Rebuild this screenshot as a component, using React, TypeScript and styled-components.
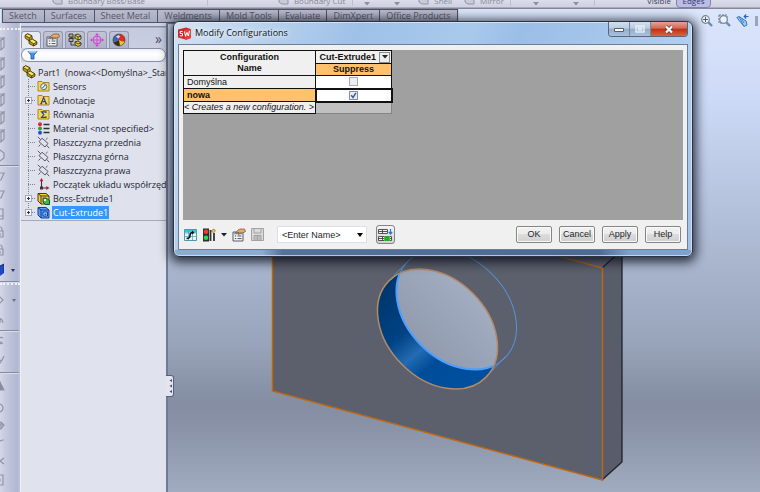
import React from "react";
import styled, { createGlobalStyle } from "styled-components";

const GlobalStyle = createGlobalStyle`
  * { box-sizing: border-box; }
  html, body { margin: 0; padding: 0; }
  body { font-family: "Open Sans", "Noto Sans", sans-serif; font-size: 9px; color: #1d1f2a; overflow: hidden; }
  button, select, input { font: inherit; color: inherit; margin: 0; padding: 0; }
  svg { display: block; flex: none; }
`;

/* ---------- page frame ---------- */

const Page = styled.div`
  min-height: 100vh;
  display: flex;
  flex-direction: column;
  overflow: hidden;
  background: linear-gradient(#dde7fc 0%, #cddaf7 20%, #a8b5cd 54%, #98a4b9 70%, #848da1 82%, #8891a5 86%, #a2acc0 100%);
`;

const Ribbon = styled.header`
  height: 9px;
  display: flex;
  align-items: flex-end;
  padding: 0 49px 3px 52px;
  overflow: hidden;
  color: #85879a;
  font-size: 8px;
  line-height: 10px;
  background: linear-gradient(#dcdde9, #d2d3e2 5px, #d0d2e0 7px, #858799 8px);
`;

const RibbonItem = styled.button<{ $after: number }>`
  display: flex;
  align-items: flex-end;
  gap: 5px;
  margin-right: ${(p) => p.$after}px;
  border: 0;
  background: none;
  white-space: nowrap;
  line-height: 10px;
`;

const RibbonRule = styled.span<{ $after: number }>`
  width: 1px;
  height: 9px;
  margin-right: ${(p) => p.$after}px;
  background: #bdbfce;
`;

const RibbonState = styled.div`
  display: flex;
  align-items: flex-end;
  gap: 5px;
  margin-left: auto;
  color: #3c3f60;
  font-size: 8px;
`;

const Edges = styled.button`
  width: 35px;
  height: 14px;
  margin-bottom: -2px;
  border: 1px solid #7f82b0;
  border-radius: 4px;
  background: #bbbde4;
  color: #343871;
  line-height: 10px;
`;

const TabRow = styled.div`
  height: 14px;
  display: flex;
  align-items: stretch;
  padding: 0 2px;
`;

const Tabs = styled.nav`
  display: flex;
  border: solid #505265;
  border-width: 1px 0 1px 1px;
  box-shadow: 0 1px 1px #77798c;
`;

const Tab = styled.button`
  padding: 0 6px;
  border: 0;
  border-right: 1px solid #505265;
  background: linear-gradient(#b9bbcd, #a9abc0);
  color: #55576a;
  line-height: 12px;
  white-space: nowrap;
  &:nth-child(-n + 4) { padding-right: 7px; }
`;

const ViewTools = styled.div`
  display: flex;
  gap: 5px;
  margin: 4px 0 -5px auto;
  overflow: hidden;
  width: 58px;
`;

const GlyphButton = styled.button`
  display: flex;
  align-items: center;
  justify-content: center;
  border: 0;
  background: none;
`;

const Body = styled.div`
  flex: 1;
  display: flex;
  min-height: 0;
`;

/* ---------- side tool strip ---------- */

const Strip = styled.aside`
  flex: none;
  width: 20px;
  padding-top: 5px;
  background: linear-gradient(90deg, #d3d6e6, #c5c9df 30%, #b1b7d1 85%, #bfc4d9);
`;

const Grip = styled.div`
  height: 5px;
  border-top: 2px dotted #f1f2f8;
`;

const Slot = styled.button<{ $h: number }>`
  width: 100%;
  height: ${(p) => p.$h}px;
  display: flex;
  align-items: center;
  gap: 7px;
  border: 0;
  background: none;
`;

const StripRule = styled.hr`
  height: 2px;
  margin: 0 1px 0 0;
  border: 0;
  background: linear-gradient(#848aa1 50%, #d9dcea 50%);
`;

/* ---------- feature panel ---------- */

const Panel = styled.section`
  flex: none;
  width: 148px;
  display: flex;
  flex-direction: column;
  border-right: 2px solid #727b95;
  border-left: 1px solid #eceef5;
  background: #e0e3ed;
`;

const PanelTop = styled.div`
  padding-top: 3px;
  background: linear-gradient(#ccd4e9 3px, #858ca3 3px, #858ca3 4px, #c6cade 5px, #cdd1e2);
`;

const PanelTabs = styled.div`
  display: flex;
  align-items: flex-end;
  gap: 2px;
  height: 22px;
  padding-top: 5px;
`;

const PanelTab = styled.button<{ $on?: boolean }>`
  width: 20px;
  height: 17px;
  display: flex;
  align-items: center;
  justify-content: center;
  border: 1px solid #9298ae;
  border-bottom: 0;
  border-radius: 3px 3px 0 0;
  background: ${(p) => (p.$on ? "#e9ebf4" : "linear-gradient(#c2c5d6, #aeb2c7)")};
`;

const More = styled.button`
  margin: 0 4px 2px auto;
  border: 0;
  background: none;
  color: #474b66;
  font-size: 14px;
  line-height: 14px;
`;

const Filter = styled.label`
  height: 14px;
  display: flex;
  align-items: center;
  gap: 3px;
  padding-left: 5px;
  border: 1px solid #868da6;
  border-radius: 7px;
  background: linear-gradient(#eef0f6, #fff 40%, #f3f4f9);
`;

const FilterInput = styled.input`
  flex: 1;
  min-width: 0;
  height: 10px;
  border: 0;
  outline: 0;
  background: none;
`;

const Tree = styled.ul`
  list-style: none;
  margin: 0;
  padding: 3px 0 1px;
  border-bottom: 1px solid #a4a9bd;
  background: #dfe2ed;
  overflow: hidden;
`;

const TreeRow = styled.li<{ $root?: boolean }>`
  height: 14px;
  display: flex;
  align-items: center;
  gap: ${(p) => (p.$root ? 2 : 0)}px;
  padding-left: ${(p) => (p.$root ? 1 : 3)}px;
  white-space: pre;
`;

const TreeIcon = styled.span`
  flex: none;
  width: 14px;
  display: flex;
  justify-content: center;
  margin-right: 2px;
`;

const TreeText = styled.span<{ $selected?: boolean }>`
  padding: 0 1px;
  line-height: 13px;
  background: ${(p) => (p.$selected ? "#3597fb" : "none")};
  color: ${(p) => (p.$selected ? "#fff" : "#232532")};
`;

/* ---------- model view ---------- */

const Scene = styled.main`
  flex: 1;
  min-width: 0;
  position: relative;
`;

const Drawing = styled.svg`
  width: 592px;
  height: 469px;
`;

const Collapse = styled.button`
  position: absolute;
  left: -2px;
  top: 352px;
  width: 8px;
  height: 22px;
  display: flex;
  align-items: center;
  justify-content: flex-end;
  border: 1px solid #596077;
  border-left: 0;
  border-radius: 0 3px 3px 0;
  background: #e3e5ef;
`;

/* ---------- dialog ---------- */

const Dialog = styled.div`
  position: absolute;
  left: 173px;
  right: 67px;
  top: 21px;
  padding: 0 4px 6px;
  border: 1px solid #2b3442;
  border-radius: 6px;
  background:
    linear-gradient(90deg, #8dacd2 0%, #8dacd2 17%, #56719a 21%, #4f6a92 82%, #7fa2cd 88%) left bottom / 100% 6px no-repeat,
    linear-gradient(115deg, #d3e2f3 0%, #bcd4ee 12%, #9fc1e8 30%, #a9c9ec 48%, #9bbee7 56%, #b2cfee 85%, #a3c0e3 100%);
  box-shadow: inset 0 0 0 1px rgba(224, 237, 250, 0.7), 0 2px 11px 3px rgba(8, 12, 24, 0.8);
`;

const TitleBar = styled.div`
  height: 22px;
  display: flex;
  align-items: center;
  gap: 4px;
`;

const Title = styled.h1`
  margin: 0;
  flex: 1;
  font-size: 9px;
  font-weight: 400;
  line-height: 14px;
  color: #10131a;
  text-shadow: 0 0 5px #fff, 0 0 8px #fff;
`;

const WindowButtons = styled.div`
  align-self: flex-start;
  display: flex;
  height: 15px;
  border: 1px solid #56677e;
  border-top: 0;
  border-radius: 0 0 4px 4px;
  overflow: hidden;
`;

const WindowButton = styled.button<{ $close?: boolean }>`
  width: ${(p) => (p.$close ? 36 : 21)}px;
  display: flex;
  align-items: center;
  justify-content: center;
  border: 0;
  border-right: ${(p) => (p.$close ? "0" : "1px solid #7288a2")};
  background: ${(p) =>
    p.$close
      ? "linear-gradient(#e5a496, #d2674f 45%, #bf2f16 50%, #d5653f)"
      : "linear-gradient(#d3e0ee, #b8cbe0 45%, #93adc9 50%, #a9c1dc)"};
`;

const Client = styled.div`
  border: 1px solid #6d7f97;
  background: #f0f0f0;
  padding: 5px 4px 0;
`;

const GridArea = styled.div`
  height: 170px;
  background: #a0a0a0;
`;

const Grid = styled.table`
  border-collapse: collapse;
  table-layout: fixed;
  width: 208px;
  font-family: "Liberation Sans", Arial, sans-serif;
  font-size: 9px;
  line-height: 11px;
  color: #111;
`;

const Row = styled.tr<{ $h: number }>`
  height: ${(p) => p.$h}px;
`;

const Cell = styled.td<{ $bg: string; $faint?: boolean; $active?: boolean }>`
  height: inherit;
  padding: 0 0 0 3px;
  border: ${(p) => (p.$active ? 2 : 1)}px solid ${(p) => (p.$faint ? "#858585" : "#111")};
  background: ${(p) => p.$bg};
  text-align: left;
  vertical-align: middle;
  white-space: nowrap;
`;

const NewCell = styled(Cell)`
  padding: 0;
`;

const Head = styled.th<{ $bg: string }>`
  height: inherit;
  padding: 0;
  border: 1px solid #111;
  background: ${(p) => p.$bg};
  font-weight: 700;
  vertical-align: middle;
`;

const HeadFlex = styled.div`
  display: flex;
  align-items: center;
  justify-content: flex-end;
  gap: 3px;
  height: 11px;
  padding-right: 1px;
`;

const DropButton = styled.button`
  width: 11px;
  height: 11px;
  display: flex;
  align-items: center;
  justify-content: center;
  border: 1px solid #8c8c8c;
  background: #ededed;
`;

const Tick = styled.input`
  appearance: none;
  display: block;
  width: 9px;
  height: 9px;
  margin: 0 auto;
  border: 1px solid #a9adb3;
  background: #eceef1;
  &:checked {
    border-color: #8590a5;
    background: #e7ecf8 url("data:image/svg+xml,%3Csvg xmlns='http://www.w3.org/2000/svg' viewBox='0 0 7 7'%3E%3Cpath d='M1.2 3.2 3 5.5 6 .8' fill='none' stroke='%233b55a5' stroke-width='1.4'/%3E%3C/svg%3E");
  }
`;

const TickCell = styled(Cell)`
  padding: 0;
`;

const Foot = styled.div`
  height: 29px;
  display: flex;
  align-items: center;
  padding: 0 2px 0 1px;
  font-family: "Liberation Sans", Arial, sans-serif;
  gap: 5px;
`;

const NameSelect = styled.select`
  appearance: none;
  width: 90px;
  height: 17px;
  margin: 0 4px 0 8px;
  padding: 0 4px;
  border: 1px solid #dcdfe6;
  border-radius: 0;
  background: #fff url("data:image/svg+xml,%3Csvg xmlns='http://www.w3.org/2000/svg' viewBox='0 0 6 4'%3E%3Cpath d='M0 0h6L3 4z'/%3E%3C/svg%3E") no-repeat right 3px center / 6px 4px;
`;

const FramedButton = styled(GlyphButton)`
  width: 19px;
  height: 19px;
  border: 1px solid #858585;
  border-radius: 3px;
  background: linear-gradient(#f4f4f4, #d2d2d2);
`;

const Actions = styled.div`
  display: flex;
  gap: 7px;
  margin-left: auto;
`;

const PushButton = styled.button`
  width: 36px;
  height: 17px;
  border: 1px solid #858585;
  border-radius: 2px;
  box-shadow: inset 0 0 0 1px #fafafa;
  background: linear-gradient(#f2f2f2, #ebebeb 50%, #dcdcdc 50%, #cfcfcf);
  line-height: 15px;
`;

/* ---------- drawings ---------- */

const Caret = ({ color = "#222" }: { color?: string }) => (
  <svg width="6" height="4" viewBox="0 0 6 4"><path d="M0 0h6L3 3.6z" fill={color} /></svg>
);

const PartIcon = () => (
  <svg width="14" height="14" viewBox="0 0 14 14" stroke="#37300b" strokeWidth=".8" strokeLinejoin="round">
    <path d="M1 2.500 3.500.800l4.500 2L8.200 6l4.800 3-.2 2.300L9.500 13 5 10.500V7.800L1.200 5.200z" fill="#c79d17" />
    <path d="m1 2.500 2.500-1.700 4.500 2-2.500 2zM5 7.800 8.200 6 13 9l-3.300 1.800z" fill="#ffe75c" />
    <path d="M5.500 4.800 5 7.800M9.700 10.800 9.500 13" fill="none" />
  </svg>
);

const PropertyIcon = () => (
  <svg width="14" height="14" viewBox="0 0 14 14">
    <path d="M1 4h10v9H1z" fill="#f7f7f7" stroke="#555b67" />
    <path d="M2 5.500h8" stroke="#7894bd" strokeWidth="1.600" />
    <path d="M2.800 8h1.500M2.800 10.600h1.500M5.500 8h4M5.500 10.600h4" stroke="#4b515b" />
    <path d="m3.400 5 2.400-2.800L8 1h4.500l1 2.500-2.800 1.400-2.300-.1-1.500 1.900-.7-.6 1-2z" fill="#e4ad69" stroke="#79502b" strokeWidth=".7" />
  </svg>
);

const ConfigIcon = () => (
  <svg width="14" height="14" viewBox="0 0 14 14" stroke="#222" strokeWidth=".8">
    <path d="M3 2v10h5M3 5h4" fill="none" />
    <path d="M1 1h4v3H1zM1 5.500h4v3H1z" fill="#b8b17a" />
    <path d="m7 2 3-1 3 2v3L10 7 7 5zM7 9l3-1 3 2v2l-3 1.500-3-2z" fill="#f1cf38" />
    <path d="m7 2 3 2 3-1M10 4v3M7 9l3 2 3-1" fill="none" />
  </svg>
);

const TargetIcon = () => (
  <svg width="14" height="14" viewBox="0 0 14 14" fill="none" stroke="#cf4bd4">
    <circle cx="7" cy="7" r="3.800" strokeWidth="1.300" /><path d="M7 0v14M0 7h14" /><path d="M5.600 1.500h2.800M5.600 12.500h2.800M1.500 5.600v2.800M12.500 5.600v2.800" />
  </svg>
);

const BallIcon = () => (
  <svg width="14" height="14" viewBox="0 0 14 14">
    <circle cx="7" cy="7" r="6" fill="#e5c922" />
    <path d="M7 7V1a6 6 0 0 0-5.800 7.500Q4 9 7 7z" fill="#3566cf" />
    <path d="M7 1a6 6 0 0 1 5.800 7.500Q10 9 7 7z" fill="#e22b1d" />
    <path d="M1.200 8.500Q4 9.200 7 7l1 5.900A6 6 0 0 1 1.200 8.500z" fill="#2b2d2b" />
    <path d="M4 3.500 7 2l1 2-2 1.500z" fill="#fff" opacity=".75" />
    <circle cx="7" cy="7" r="6" fill="none" stroke="#44413c" strokeWidth=".7" />
  </svg>
);

const FunnelIcon = () => (
  <svg width="11" height="10" viewBox="0 0 11 10">
    <path d="M1 1.500h9L7 5v4H4V5z" fill="#4c8fe0" stroke="#1f55ae" strokeWidth=".8" /><ellipse cx="5.500" cy="1.700" rx="4.200" ry="1" fill="#a3d1fb" />
  </svg>
);

const Folder = ({ children }: { children?: React.ReactNode }) => (
  <svg width="13" height="12" viewBox="0 0 13 12">
    <path d="M1 1.500h4l1 1h6v8.500H1z" fill="#fbd750" stroke="#a17c17" strokeWidth=".9" />{children}
  </svg>
);

const SensorIcon = () => (
  <Folder><circle cx="6.700" cy="6.600" r="3" fill="#edf4f4" stroke="#436785" /><path d="m5.500 8 2.800-3" stroke="#26405c" /></Folder>
);
const NoteIcon = () => (
  <Folder><path d="m4 9.800 2.600-6.300 2.600 6.300M5 7.600h3.200M3.200 9.800h2M8.200 9.800h2" fill="none" stroke="#1f3ea6" strokeWidth="1.100" /></Folder>
);
const SumIcon = () => (
  <Folder><path d="M9 5V3.900H4.500l2.400 2.700-2.400 2.800H9V8.200" fill="none" stroke="#1f3ea6" strokeWidth="1.100" /></Folder>
);

const MaterialIcon = () => (
  <svg width="13" height="13" viewBox="0 0 13 13">
    <circle cx="3" cy="2.300" r="2" fill="#e0243a" /><circle cx="3" cy="6.500" r="2" fill="#2aa23c" /><circle cx="3" cy="10.700" r="2" fill="#2e4bd4" />
    <path d="M6.500 2.500h6M6.500 6.500h6M6.500 10.500h6" stroke="#2e2e33" strokeWidth="1.300" />
  </svg>
);

const PlaneIcon = () => (
  <svg width="13" height="13" viewBox="0 0 13 13" fill="none" stroke="#484b57" strokeWidth=".9">
    <path d="m5 2.200 6 5.200L8 11 2 5.700zM.8.800l2.700 2.700M9.600 9.300l2.600 2.900M10.500 2 8.800 3.600M3.500 8.500l-2 2" />
  </svg>
);

const OriginIcon = () => (
  <svg width="13" height="13" viewBox="0 0 13 13">
    <path d="M4.500 2v8h6" fill="none" stroke="#3a3338" strokeWidth="1.100" />
    <path d="m4.500 0 1.900 3.300H2.600zM12.500 10l-3.200 2V8z" fill="#b51e2c" /><path d="M3 8.500h3v3H3z" fill="#4a2c33" />
  </svg>
);

const BossIcon = () => (
  <svg width="13" height="13" viewBox="0 0 13 13" strokeLinejoin="round">
    <path d="M1 1.500h8l3 2.500v8H4L1 9z" fill="#f3cf37" stroke="#4b3b0c" /><path d="M1 1.500 4 4h8M4 4v8" fill="none" stroke="#4b3b0c" />
    <path d="M6 6h3l3.500 2.500v4H8.500L6 10z" fill="#3eb649" stroke="#13561c" /><path d="M7 7h2v2H7z" fill="#e2ffdf" />
  </svg>
);

const CutIcon = () => (
  <svg width="13" height="13" viewBox="0 0 13 13" strokeLinejoin="round">
    <path d="M1 1.500h8l3 2.500v8H4L1 9z" fill="#5a9df5" stroke="#103c9b" /><path d="M1 1.500 4 4h8M4 4v8" fill="none" stroke="#103c9b" />
    <path d="M6 6h4.500v4H6z" fill="#bce0ff" stroke="#163fa0" /><path d="M7.500 7.500h1.800v1.500H7.500z" fill="#1d49a9" />
  </svg>
);

const Branch = ({ expandable, last }: { expandable?: boolean; last?: boolean }) => (
  <svg width="12" height="14" viewBox="0 0 12 14" shapeRendering="crispEdges">
    <path d={`M4.500 0V${last ? 7 : 14}M4 7.500h8`} stroke="#7f8392" strokeDasharray="1 1" fill="none" />
    {expandable && (
      <g><path d="M1.500 4.500h6v6h-6z" fill="#f7f8fb" stroke="#a3a8b8" /><path d="M3 7.500h3M4.500 6v3" stroke="#2a3352" /></g>
    )}
  </svg>
);

const stripShapes: Record<string, string> = {
  cube: "M-4 3h6l2-2v9l-3 3h-5M1 3v10M1 3l3-2H-2",
  house: "M-3 5l3-3 4 3v5l-4 3h-4",
  sheet: "M-4 3h8l-3 7h-5",
  stand: "M-3 2h6v7h-6M3 9v3h-6",
  lock: "M-3 6h6v6h-6M2 6V4a2 2 0 0 0-4 0M0 8v3",
  diamond: "M-1 3l4 4-4 4",
  arc: "M-2 4q4 0 5 5M0 5v4",
  round: "M3 4a3 3 0 1 0 0 5M-1 8h3",
  pencil: "M4 2 1 8-2 11M2 7l-2-1",
  wedge: "M0 2l4 8h-5z",
  ring: "M-1 3a4 4 0 0 1 0 8",
  hex: "M-2 4h3l3 3-3 4h-3M1 4v7M-2 7h6",
  hook: "M-2 9q0-5 6-5",
  cross: "M4 4 0 7l4 3M-2 7h3",
  box: "M-2 2h5v10h-5M-2 5a2 2 0 0 1 0 4",
};

const StripGlyph = ({ shape }: { shape: string }) => (
  <svg width="5" height="14" viewBox="0 0 5 14" fill={shape === "wedge" ? "#868b9b" : "none"} stroke="#8f94a4" strokeWidth="1.200"><path d={stripShapes[shape]} /></svg>
);

const BlueCube = () => (
  <svg width="4" height="14" viewBox="0 0 4 14"><path d="M0 3 4 1v9L0 13z" fill="#2348c4" /><path d="M0 3 4 1v9" fill="none" stroke="#122c85" /></svg>
);

const Lens = ({ dashed }: { dashed?: boolean }) => (
  <svg width="13" height="13" viewBox="0 0 13 13" fill="none">
    {dashed && <path d="M1 1h8v8H1z" stroke="#68717e" strokeDasharray="2 1" />}
    <path d="m8 8 4 4" stroke="#698abd" strokeWidth="2.400" />
    <circle cx="5.500" cy="5.500" r="3.800" fill="#e9f3fb" stroke="#7a8390" strokeWidth="1.200" />
    {!dashed && <path d="M5.500 3v5M3 5.500h5" stroke="#495260" strokeWidth=".9" />}
  </svg>
);

const ViewIcon = () => (
  <svg width="13" height="13" viewBox="0 0 13 13" fill="none">
    <path d="M.8 3.500 3 2.500l7 4.500 1 4-3 1.500z" fill="#a0ccf2" stroke="#347ac1" />
    <path d="m3 2.500 5 10M5.500 4.500 8 9" stroke="#347ac1" strokeWidth=".8" />
    <path d="M12.500 2.500h-4M10.200.500l-2 2 2 2" stroke="#2267cd" strokeWidth="1.200" />
  </svg>
);

const LogoIcon = () => (
  <svg width="13" height="13" viewBox="0 0 13 13">
    <path d="m0 2.500 8-2 5 1.500v9l-4.500 1.800L0 10.500z" fill="#cf2a2b" /><path d="m6 3 7-1v9l-6 1.700z" fill="#e14339" />
    <path d="M4.600 4.500H2.200v2h2.300v2.300H1.800M6.500 4.500l1 4.800L9 5.500l1.300 3.500L11.500 4" fill="none" stroke="#fff" strokeWidth="1" />
  </svg>
);

const GridIcon = () => (
  <svg width="13" height="12" viewBox="0 0 13 12">
    <path d="M.5.500h12v11H.5z" fill="#e9fbff" stroke="#4999b5" /><path d="M1 1h11v2.500H1z" fill="#37c4e4" />
    <path d="M.5 4h12M.5 7.500h12M4.500 1v10M8.500 1v10" stroke="#5aa4ba" strokeWidth=".8" /><path d="M2.500 9.500Q6 9.500 6 6.500T8.500 3.500" fill="none" stroke="#111" strokeWidth="1.600" /><path d="m8 1.500 2.500 2L8 5.500z" fill="#111" />
  </svg>
);

const SignalIcon = () => (
  <svg width="14" height="14" viewBox="0 0 14 14">
    <path d="M1 .500h6v13H1z" fill="#2c302c" /><circle cx="4" cy="3.700" r="2.300" fill="#ef3b2f" /><circle cx="4" cy="9.800" r="2.300" fill="#2fd64a" />
    <path d="M8.500 2v11M12 5v8" stroke="#343434" strokeWidth="1.800" /><path d="m9 3 3-2 1.500 2-2 1.800z" fill="#f0c634" stroke="#5c4910" strokeWidth=".5" />
  </svg>
);

const SaveIcon = () => (
  <svg width="13" height="13" viewBox="0 0 13 13" fill="none" stroke="#a2a2a2">
    <path d="M.5.500h12v12H.5z" fill="#dadada" /><path d="M3 .500v4.500h7V.500M3 12.500v-5h7v5M3 9h7M3 11h7M6.500 7.500v5" />
  </svg>
);

const TableIcon = () => (
  <svg width="15" height="14" viewBox="0 0 15 14" fill="none">
    <path d="M.5 1.500h9v4h-9zM.5 8.500h13v4H.5zM.5 3.500h9M.5 10.500h13M4.500 1.500v4M4.500 8.500v4" fill="#f3f3f3" stroke="#434343" strokeWidth=".9" />
    <path d="M6 8h6v5H6z" fill="#3ec73a" /><path d="M8 8v5M10 8v5" stroke="#15801f" strokeWidth=".8" /><path d="M12.500 1v4.500M10.800 4l1.700 2 1.700-2" stroke="#2f72db" strokeWidth="1.200" />
  </svg>
);

const CommandGlyph = () => (
  <svg width="11" height="9" viewBox="0 0 11 9"><path d="M1 1h6l3 2v4H4L1 5z" fill="#c9cbd7" stroke="#9194a4" /></svg>
);

/* ---------- data ---------- */

const ribbonTabs = ["Sketch", "Surfaces", "Sheet Metal", "Weldments", "Mold Tools", "Evaluate", "DimXpert", "Office Products"];

type Node = { text: string; icon: React.ReactNode; expandable?: boolean; selected?: boolean };
const nodes: Node[] = [
  { text: "Sensors", icon: <SensorIcon /> },
  { text: "Adnotacje", icon: <NoteIcon />, expandable: true },
  { text: "Równania", icon: <SumIcon /> },
  { text: "Material <not specified>", icon: <MaterialIcon /> },
  { text: "Płaszczyzna przednia", icon: <PlaneIcon /> },
  { text: "Płaszczyzna górna", icon: <PlaneIcon /> },
  { text: "Płaszczyzna prawa", icon: <PlaneIcon /> },
  { text: "Początek układu współrzędnych", icon: <OriginIcon /> },
  { text: "Boss-Extrude1", icon: <BossIcon />, expandable: true },
  { text: "Cut-Extrude1", icon: <CutIcon />, expandable: true, selected: true },
];

const strip: { shape?: string; h?: number; arrow?: string; rule?: boolean; grip?: boolean }[] = [
  { grip: true },
  { shape: "cube", h: 22 }, { shape: "cube", h: 18 }, { shape: "cube", h: 18 }, { shape: "cube", h: 18 },
  { shape: "cube", h: 18 }, { shape: "cube", h: 18 }, { shape: "house", h: 20 },
  { rule: true },
  { shape: "sheet", h: 19 }, { shape: "sheet", h: 18 }, { shape: "stand", h: 19 }, { shape: "lock", h: 18 },
  { shape: "lock", h: 18 }, { shape: "blue", h: 22, arrow: "#2d3163" },
  { rule: true }, { grip: true },
  { shape: "diamond", h: 24, arrow: "#6d7080" }, { shape: "arc", h: 18 },
  { rule: true },
  { shape: "round", h: 18 }, { shape: "pencil", h: 22 },
  { rule: true },
  { shape: "wedge", h: 26 }, { shape: "ring", h: 16 }, { shape: "hex", h: 18 }, { shape: "hook", h: 17 },
  { shape: "cross", h: 19 }, { shape: "box", h: 19 },
];

const Model = () => (
  <Drawing viewBox="168 23 592 469" aria-label="Plate with a round cut">
    <defs>
      <linearGradient id="wall" gradientUnits="userSpaceOnUse" x1="385" y1="275" x2="475" y2="385">
        <stop offset="0" stopColor="#003468" /><stop offset=".4" stopColor="#004284" /><stop offset=".57" stopColor="#236bb2" /><stop offset=".7" stopColor="#004c99" /><stop offset="1" stopColor="#00509f" />
      </linearGradient>
      <linearGradient id="sky" gradientUnits="userSpaceOnUse" x1="0" y1="262" x2="0" y2="372">
        <stop offset="0" stopColor="#a8b3c8" /><stop offset="1" stopColor="#8f98ab" />
      </linearGradient>
      <clipPath id="hole"><ellipse cx="437.500" cy="329" rx="68.400" ry="50.200" transform="rotate(45 437.500 329)" /></clipPath>
    </defs>
    <path d="M272 179 602 268 622 250 292 161z" fill="#646775" />
    <path d="M272 179 602 268V480L272 391z" fill="#5c5f6c" />
    <path d="M602 268 622 250V462L602 480z" fill="#595c69" />
    <path d="M602 268 622 250V462L602 480" fill="none" stroke="#20222a" strokeWidth="1.300" />
    <path d="M272.500 179 602.500 268V480L272.500 391z" fill="none" stroke="#bb6814" strokeWidth="1.500" />
    <g clipPath="url(#hole)">
      <rect x="370" y="260" width="140" height="140" fill="url(#wall)" />
      <ellipse cx="456.500" cy="309.500" rx="68.400" ry="50.200" transform="rotate(45 456.500 309.500)" fill="url(#sky)" />
    </g>
    <g fill="none" stroke="#5794dc">
      <ellipse cx="456.500" cy="309.500" rx="68.400" ry="50.200" transform="rotate(45 456.500 309.500)" />
      <path d="m389 281 19-20M486 377l19-20" />
    </g>
    <g clipPath="url(#hole)">
      <ellipse cx="456.500" cy="309.500" rx="68.400" ry="50.200" transform="rotate(45 456.500 309.500)" fill="none" stroke="#4ba0ff" strokeWidth="2" />
    </g>
    <ellipse cx="437.500" cy="329" rx="68.400" ry="50.200" transform="rotate(45 437.500 329)" fill="none" stroke="#b28a67" strokeWidth="1.500" />
  </Drawing>
);

export default function App() {
  return (
    <Page>
      <GlobalStyle />
      <Ribbon>
        <RibbonItem $after={62}><CommandGlyph />Boundary Boss/Base</RibbonItem>
        <RibbonRule $after={70} />
        <RibbonItem $after={7}><CommandGlyph />Boundary Cut</RibbonItem>
        <RibbonRule $after={11} />
        <RibbonItem $after={24} aria-label="Pattern"><Caret color="#8c8e9e" /></RibbonItem>
        <RibbonItem $after={18} aria-label="Rib"><Caret color="#8c8e9e" /></RibbonItem>
        <RibbonItem $after={12}><CommandGlyph />Shell</RibbonItem>
        <RibbonItem $after={6}><CommandGlyph />Mirror</RibbonItem>
        <RibbonRule $after={22} />
        <RibbonItem $after={34} aria-label="Geometry"><Caret color="#8c8e9e" /></RibbonItem>
        <RibbonItem $after={15} aria-label="Curves"><Caret color="#8c8e9e" /></RibbonItem>
        <RibbonRule $after={0} />
        <RibbonState>Visible<Edges>Edges</Edges></RibbonState>
      </Ribbon>
      <TabRow>
        <Tabs>{ribbonTabs.map((t) => <Tab key={t}>{t}</Tab>)}</Tabs>
        <ViewTools>
          <GlyphButton aria-label="Zoom to fit"><Lens /></GlyphButton>
          <GlyphButton aria-label="Zoom to area"><Lens dashed /></GlyphButton>
          <GlyphButton aria-label="Previous view"><ViewIcon /></GlyphButton>
          <GlyphButton aria-label="Section view"><svg width="6" height="12"><path d="M1 1h5v10H1z" fill="#9ca5b8" /></svg></GlyphButton>
        </ViewTools>
      </TabRow>
      <Body>
        <Strip>
          {strip.map((s, i) =>
            s.rule ? <StripRule key={i} /> : s.grip ? <Grip key={i} /> : (
              <Slot key={i} $h={s.h ?? 18} aria-label={s.shape}>
                {s.shape === "blue" ? <BlueCube /> : <StripGlyph shape={s.shape ?? "cube"} />}
                {s.arrow && <svg width="4" height="3" viewBox="0 0 4 3"><path d="M0 0h4L2 3z" fill={s.arrow} /></svg>}
              </Slot>
            )
          )}
        </Strip>
        <Panel>
          <PanelTop>
            <PanelTabs>
              <PanelTab $on aria-label="Features"><PartIcon /></PanelTab>
              <PanelTab aria-label="Properties"><PropertyIcon /></PanelTab>
              <PanelTab aria-label="Configurations"><ConfigIcon /></PanelTab>
              <PanelTab aria-label="Dimensions"><TargetIcon /></PanelTab>
              <PanelTab aria-label="Display"><BallIcon /></PanelTab>
              <More aria-label="More">»</More>
            </PanelTabs>
            <Filter><FunnelIcon /><FilterInput aria-label="Filter" /></Filter>
          </PanelTop>
          <Tree>
            <TreeRow $root><PartIcon /><span>{"Part1  (nowa<<Domyślna>_Stan"}</span></TreeRow>
            {nodes.map((n, i) => (
              <TreeRow key={n.text}>
                <Branch expandable={n.expandable} last={i === nodes.length - 1} />
                <TreeIcon>{n.icon}</TreeIcon>
                <TreeText $selected={n.selected}>{n.text}</TreeText>
              </TreeRow>
            ))}
          </Tree>
        </Panel>
        <Scene>
          <Model />
          <Collapse aria-label="Collapse panel">
            <svg width="4" height="16" viewBox="0 0 4 16"><path d="M3 1v3L.5 2.500zM3 6.500v3L.5 8zM3 12v3L.5 13.500z" fill="#4a4890" /></svg>
          </Collapse>
        </Scene>
      </Body>
      <Dialog role="dialog" aria-labelledby="dialog-title">
        <TitleBar>
          <LogoIcon />
          <Title id="dialog-title">Modify Configurations</Title>
          <WindowButtons>
            <WindowButton aria-label="Minimize"><svg width="10" height="5"><path d="M.5 1.500h9v3h-9z" fill="#fff" stroke="#53606f" /></svg></WindowButton>
            <WindowButton aria-label="Maximize"><svg width="10" height="8"><path d="M1 1h8v6H1zM3.500 3h3v2h-3z" fill="none" stroke="#e5eef7" strokeWidth="1.500" /></svg></WindowButton>
            <WindowButton $close aria-label="Close"><svg width="10" height="9" viewBox="0 0 10 9"><path d="m2 1.500 6 6M8 1.500l-6 6" stroke="#5f3d3d" strokeWidth="3.600" /><path d="m2 1.500 6 6M8 1.500l-6 6" stroke="#fff" strokeWidth="2.200" /></svg></WindowButton>
          </WindowButtons>
        </TitleBar>
        <Client>
          <GridArea>
            <Grid>
              <colgroup><col width="132" /><col width="76" /></colgroup>
              <thead>
                <Row $h={13}>
                  <Head $bg="#f0f0f0" rowSpan={2}>Configuration<br />Name</Head>
                  <Head $bg="#f0f0f0"><HeadFlex>Cut-Extrude1<DropButton aria-label="Column options"><Caret /></DropButton></HeadFlex></Head>
                </Row>
                <Row $h={12}><Head $bg="#ffc16d">Suppress</Head></Row>
              </thead>
              <tbody>
                <Row $h={13}>
                  <Cell $bg="#f0f0f0">Domyślna</Cell>
                  <TickCell $bg="#fff"><Tick type="checkbox" aria-label="Suppress in Domyślna" /></TickCell>
                </Row>
                <Row $h={13}>
                  <Cell $bg="#ffc16d"><b>nowa</b></Cell>
                  <TickCell $bg="#fff" $active><Tick type="checkbox" defaultChecked aria-label="Suppress in nowa" /></TickCell>
                </Row>
                <Row $h={12}>
                  <NewCell $bg="#f0f0f0"><i>&lt; Creates a new configuration. &gt;</i></NewCell>
                  <Cell $bg="#c0c0c0" $faint />
                </Row>
              </tbody>
            </Grid>
          </GridArea>
          <Foot>
            <GlyphButton aria-label="Parameters"><GridIcon /></GlyphButton>
            <GlyphButton aria-label="Rebuild"><SignalIcon /></GlyphButton>
            <GlyphButton aria-label="Rebuild options"><Caret /></GlyphButton>
            <GlyphButton aria-label="Custom properties"><PropertyIcon /></GlyphButton>
            <GlyphButton aria-label="Save"><SaveIcon /></GlyphButton>
            <NameSelect aria-label="Table name"><option>&lt;Enter Name&gt;</option></NameSelect>
            <FramedButton aria-label="Table view"><TableIcon /></FramedButton>
            <Actions>
              <PushButton>OK</PushButton>
              <PushButton>Cancel</PushButton>
              <PushButton>Apply</PushButton>
              <PushButton>Help</PushButton>
            </Actions>
          </Foot>
        </Client>
      </Dialog>
    </Page>
  );
}
